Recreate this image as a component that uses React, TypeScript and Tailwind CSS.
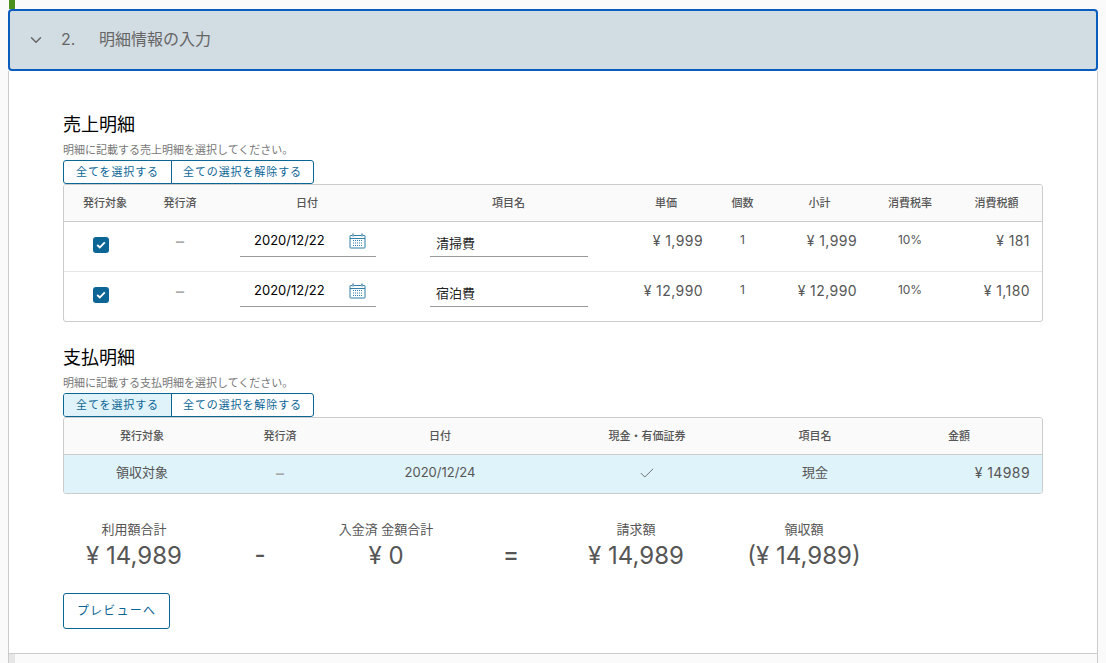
import { ChevronDown } from "lucide-react";

const salesCols = "grid grid-cols-[82px_68px_186px_217px_98px_55px_99px_82px_91px]";
const paymentCols = "grid grid-cols-[156px_120px_200px_214px_122px_166px]";

const salesHeaders = ["発行対象", "発行済", "日付", "項目名", "単価", "個数", "小計", "消費税率", "消費税額"];
const paymentHeaders = ["発行対象", "発行済", "日付", "現金・有価証券", "項目名", "金額"];

const salesRows = [
  { date: "2020/12/22", name: "清掃費", price: "¥ 1,999", qty: "1", subtotal: "¥ 1,999", rate: "10%", tax: "¥ 181" },
  { date: "2020/12/22", name: "宿泊費", price: "¥ 12,990", qty: "1", subtotal: "¥ 12,990", rate: "10%", tax: "¥ 1,180" },
];

function CalendarIcon() {
  return (
    <svg width="17" height="16" viewBox="0 0 17 16" fill="none" className="block text-[#2f7fa8]">
      <rect x="1" y="2.5" width="15" height="12.5" rx="0.5" stroke="currentColor" />
      <path d="M1 5.5h15" stroke="currentColor" />
      <path d="M4 0.5v3M13 0.5v3" stroke="#7fa9c2" strokeWidth="2" />
      <path d="M4 7.5h9M4 10h9M4 12.5h9" stroke="currentColor" strokeDasharray="1 1" />
    </svg>
  );
}

function CheckBox() {
  return (
    <span className="flex h-4 w-4 items-center justify-center rounded-[3px] bg-[#0b6595]">
      <svg width="10" height="8" viewBox="0 0 10 8" fill="none">
        <path d="M1.2 4l2.6 2.5L8.8 1.4" stroke="white" strokeWidth="1.8" />
      </svg>
    </span>
  );
}

function SectionHead({ title, body, active }: { title: string; body: string; active?: boolean }) {
  return (
    <div>
      <h2 className="pt-px text-lg leading-5 text-black">{title}</h2>
      <p className="mt-[8px] text-[11px] leading-[14px] text-[#777777]">{body}</p>
      <div className="mt-[3px] flex h-6 w-[251px] rounded-[3px] border border-[#0b6595] text-[11px] tracking-[0.08em] text-[#0b6595]">
        <button className={`w-[108px] rounded-l-[2px] border-r border-[#0b6595] ${active ? "bg-[#e0f3fa]" : ""}`}>
          全てを選択する
        </button>
        <button className="flex-1">全ての選択を解除する</button>
      </div>
    </div>
  );
}

function Total({ label, value, width }: { label: string; value: string; width: string }) {
  return (
    <div className={`${width} text-center text-[#565656]`}>
      <p className="text-[13px] leading-5">{label}</p>
      <p className="mt-[3px] text-2xl leading-7">{value}</p>
    </div>
  );
}

export default function App() {
  return (
    <div
      className="flex h-[663px] w-[1106px] flex-col overflow-hidden bg-[#fafafa] pl-2 pr-2 text-[#565656]"
      style={{ fontFamily: 'Inter, "Noto Sans CJK JP", sans-serif' }}
    >
      <div className="ml-px h-[9px] w-[6px] shrink-0 bg-[#4d8f1c]" />
      <div className="flex h-[62px] shrink-0 items-center rounded-[4px] border-2 border-[#0a5cbd] bg-[#d2dce3] pb-[2px] pl-[17px] text-[#666666]">
        <ChevronDown size={18} strokeWidth={2} className="mt-[2px]" />
        <span className="ml-[16px] w-[38px] text-base">2.</span>
        <span className="text-base">明細情報の入力</span>
      </div>

      <div className="flex flex-1 flex-col border-x border-[#cccccc] bg-white pl-[54px] pt-[43px]">
        <SectionHead title="売上明細" body="明細に記載する売上明細を選択してください。" />

        <div className="w-[980px] overflow-hidden rounded-[3px] border border-[#cccccc]">
          <div className={`${salesCols} h-[37px] items-center border-b border-[#cccccc] bg-[#fafafa] text-center text-[11px] font-medium text-[#565656]`}>
            {salesHeaders.map((header) => (
              <span key={header}>{header}</span>
            ))}
          </div>
          {salesRows.map((row, index) => (
            <div
              key={row.name}
              className={`${salesCols} ${index === 0 ? "h-[50px] border-b border-[#e4e4e4]" : "h-[49px]"} text-xs`}
            >
              <div className="pl-[29px] pt-[15px]">
                <CheckBox />
              </div>
              <div className="pt-[7px] text-center text-base font-semibold text-[#aaaaaa]">–</div>
              <div className="ml-[26px] mr-[24px] mt-[1px] flex h-[34px] items-center justify-between border-b border-[#9a9a9a] pl-[14px] pr-[10px] pt-[2px] text-[13px] text-black">
                <span>{row.date}</span>
                <CalendarIcon />
              </div>
              <div className="ml-[30px] mr-[29px] mt-[1px] h-[34px] border-b border-[#9a9a9a] pl-[6px] pt-[10px] text-[13px] leading-5 text-[#222222]">
                {row.name}
              </div>
              <div className="pr-3 pt-[9px] text-right text-sm tracking-[0.03em]">{row.price}</div>
              <div className="pt-[10px] text-center">{row.qty}</div>
              <div className="pr-3 pt-[9px] text-right text-sm tracking-[0.03em]">{row.subtotal}</div>
              <div className="pt-[10px] text-center">{row.rate}</div>
              <div className="pr-3 pt-[9px] text-right text-sm tracking-[0.03em]">{row.tax}</div>
            </div>
          ))}
        </div>

        <div className="mt-[25px]">
          <SectionHead title="支払明細" body="明細に記載する支払明細を選択してください。" active />
        </div>

        <div className="w-[980px] overflow-hidden rounded-[3px] border border-[#cccccc]">
          <div className={`${paymentCols} h-[37px] items-center border-b border-[#cccccc] bg-[#fafafa] text-center text-[11px] font-medium text-[#565656]`}>
            {paymentHeaders.map((header) => (
              <span key={header}>{header}</span>
            ))}
          </div>
          <div className={`${paymentCols} h-[38px] items-center bg-[#dff3fa] pb-[2px] text-center text-[13px]`}>
            <span>領収対象</span>
            <span className="text-base font-semibold text-[#aaaaaa]">–</span>
            <span>2020/12/24</span>
            <span className="flex justify-center">
              <svg width="14" height="10" viewBox="0 0 14 10" fill="none">
                <path d="M0.8 5l4 4L13.2 0.8" stroke="#565656" strokeWidth="0.8" />
              </svg>
            </span>
            <span>現金</span>
            <span className="pr-3 text-right text-sm tracking-[0.03em]">¥ 14989</span>
          </div>
        </div>

        <div className="mt-[25px] flex items-start">
          <Total label="利用額合計" value="¥ 14,989" width="w-[142px]" />
          <span className="mt-[22px] w-[110px] text-center text-2xl font-medium leading-7">-</span>
          <Total label="入金済 金額合計" value="¥ 0" width="w-[142px]" />
          <span className="mt-[22px] w-[108px] text-center text-2xl font-medium leading-7">=</span>
          <Total label="請求額" value="¥ 14,989" width="w-[142px]" />
          <Total label="領収額" value="(¥ 14,989)" width="w-[194px]" />
        </div>

        <button className="mt-[23px] h-9 w-[107px] rounded-[3px] border border-[#0b6595] text-xs tracking-[0.1em] text-[#0b6595]">
          プレビューへ
        </button>
      </div>

      <div className="flex h-[10px] shrink-0 border-x border-t border-[#cccccc] bg-[#fafafa]">
        <div className="h-full w-[6px] bg-[#e6e6e6]" />
      </div>
    </div>
  );
}
